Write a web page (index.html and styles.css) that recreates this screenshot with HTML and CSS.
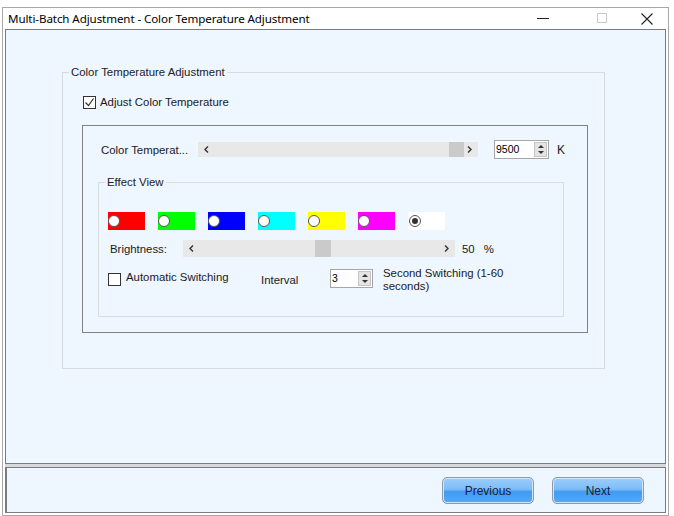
FILE: index.html
```html
<!DOCTYPE html>
<html lang="en">
<head>
    <meta charset="UTF-8">
    <title>Multi-Batch Adjustment - Color Temperature Adjustment</title>
    <link rel="stylesheet" href="styles.css">
</head>
<body>
    <div class="window">
        <div class="titlebar">
            <span class="title">Multi-Batch Adjustment - Color Temperature Adjustment</span>
            <div class="win-controls">
                <svg class="ctl-min" width="13" height="13" viewBox="0 0 13 13"><path d="M0 6.5h12" stroke="#222" stroke-width="1"/></svg>
                <svg class="ctl-max" width="11" height="11" viewBox="0 0 11 11"><rect x="0.5" y="0.5" width="9" height="9" fill="none" stroke="#c8c8c8"/></svg>
                <svg class="ctl-close" width="12" height="12" viewBox="0 0 12 12"><path d="M0.5 0.5l11 11M11.5 0.5l-11 11" stroke="#222" stroke-width="1.1"/></svg>
            </div>
        </div>

        <div class="main">
            <fieldset class="group outer-group">
                <legend>Color Temperature Adjustment</legend>
                <div class="check-row">
                    <span class="checkbox">
                        <svg width="11" height="11" viewBox="0 0 11 11"><path d="M1.5 5.5l3 3 5-7" fill="none" stroke="#333" stroke-width="1.2"/></svg>
                    </span>
                    <span>Adjust Color Temperature</span>
                </div>

                <div class="inner-box">
                    <div class="temp-row">
                        <span class="temp-label">Color Temperat...</span>
                        <div class="slider temp-slider">
                            <svg class="chev" width="5" height="7" viewBox="0 0 5 7"><path d="M4 0.5L1 3.5l3 3" fill="none" stroke="#333" stroke-width="1.4"/></svg>
                            <div class="track"><div class="thumb" style="margin-left: 237px"></div></div>
                            <svg class="chev" width="5" height="7" viewBox="0 0 5 7"><path d="M1 0.5l3 3-3 3" fill="none" stroke="#333" stroke-width="1.4"/></svg>
                        </div>
                        <div class="spin temp-spin">
                            <span class="spin-value">9500</span>
                            <span class="spin-btns">
                                <span class="spin-up"></span>
                                <span class="spin-down"></span>
                            </span>
                        </div>
                        <span class="unit-k">K</span>
                    </div>

                    <fieldset class="group effect-group">
                        <legend>Effect View</legend>
                        <div class="swatches">
                            <span class="swatch red"><span class="radio"></span></span>
                            <span class="swatch green"><span class="radio"></span></span>
                            <span class="swatch blue"><span class="radio"></span></span>
                            <span class="swatch cyan"><span class="radio"></span></span>
                            <span class="swatch yellow"><span class="radio"></span></span>
                            <span class="swatch magenta"><span class="radio"></span></span>
                            <span class="swatch white"><span class="radio selected"></span></span>
                        </div>

                        <div class="bright-row">
                            <span class="bright-label">Brightness:</span>
                            <div class="slider bright-slider">
                                <svg class="chev" width="5" height="7" viewBox="0 0 5 7"><path d="M4 0.5L1 3.5l3 3" fill="none" stroke="#333" stroke-width="1.4"/></svg>
                                <div class="track"><div class="thumb" style="margin-left: 118px"></div></div>
                                <svg class="chev" width="5" height="7" viewBox="0 0 5 7"><path d="M1 0.5l3 3-3 3" fill="none" stroke="#333" stroke-width="1.4"/></svg>
                            </div>
                            <span class="bright-value">50</span>
                            <span class="bright-unit">%</span>
                        </div>

                        <div class="switch-row">
                            <span class="checkbox"></span>
                            <span class="auto-label">Automatic Switching</span>
                            <span class="interval-label">Interval</span>
                            <div class="spin interval-spin">
                                <span class="spin-value">3</span>
                                <span class="spin-btns">
                                    <span class="spin-up"></span>
                                    <span class="spin-down"></span>
                                </span>
                            </div>
                            <span class="switch-note">Second Switching (1-60<br>seconds)</span>
                        </div>
                    </fieldset>
                </div>
            </fieldset>
        </div>

        <div class="divider"></div>

        <div class="footer">
            <button class="btn">Previous</button>
            <button class="btn">Next</button>
        </div>
    </div>
</body>
</html>
```

FILE: styles.css
```css
body {
    margin: 0;
    background: #ffffff;
    font-family: "Liberation Sans", Arial, sans-serif;
    font-size: 11.4px;
    color: #1a1a1a;
}
.window {
    margin: 7px 0 0 2px;
    width: 667px;
    box-sizing: border-box;
    border: 1px solid #a8a8a8;
    background: #ffffff;
}
.titlebar {
    height: 21px;
    display: flex;
    align-items: center;
    padding-left: 5px;
}
.title {
    font-family: "Noto Sans", sans-serif;
    font-size: 11.6px;
    color: #000;
    letter-spacing: -0.1px;
}
.win-controls {
    margin-left: auto;
    display: flex;
    align-items: center;
}
.ctl-min {
    margin-right: 47px;
}
.ctl-max {
    margin-right: 33px;
}
.ctl-close {
    margin-right: 15px;
}
.main {
    margin: 0 2px;
    height: 435px;
    box-sizing: border-box;
    border: 1px solid #7c7c7c;
    background: #eef6ff;
    padding-top: 35px;
}
.group {
    margin: 0;
    padding: 0;
    border: 1px solid #d6dbe0;
    min-inline-size: 0;
}
.group legend {
    margin-left: 6px;
    padding: 0 2px;
    line-height: 14px;
    color: #222;
}
.outer-group {
    margin-left: 56px;
    width: 543px;
    box-sizing: border-box;
    padding-bottom: 35px;
}
.check-row {
    display: flex;
    align-items: center;
    margin: 16px 0 0 20px;
    height: 14px;
    gap: 4px;
}
.checkbox {
    width: 11px;
    height: 11px;
    border: 1px solid #333;
    background: #fff;
    display: flex;
    align-items: center;
    justify-content: center;
}
.inner-box {
    margin: 16px 0 0 19px;
    width: 506px;
    box-sizing: border-box;
    border: 1px solid #828282;
    padding: 14px 0 15px;
}
.temp-row {
    display: flex;
    align-items: center;
    height: 19px;
    padding-left: 18px;
}
.temp-label {
    width: 97px;
}
.slider {
    display: flex;
    align-items: center;
    background: #e8e8e8;
    box-sizing: border-box;
    padding: 0 6px;
}
.track {
    flex: 1;
    display: flex;
    align-items: stretch;
    height: 100%;
    margin: 0 3px;
}
.thumb {
    width: 15px;
    background: #cacaca;
}
.temp-slider {
    width: 280px;
    height: 15px;
}
.spin {
    display: flex;
    align-items: stretch;
    background: #fff;
    border: 1px solid #a6a6a6;
    box-sizing: border-box;
    height: 19px;
}
.spin-value {
    flex: 1;
    padding-left: 1px;
    line-height: 17px;
    font-size: 10.5px;
    color: #000;
}
.spin-btns {
    width: 13px;
    display: flex;
    flex-direction: column;
    margin: 1px 1px 1px 0;
    background: #e4e4e4;
    border: 1px solid #c4c4c4;
    box-sizing: border-box;
}
.spin-up, .spin-down {
    flex: 1;
    display: flex;
    align-items: center;
    justify-content: center;
}
.spin-up::before {
    content: "";
    border-left: 3px solid transparent;
    border-right: 3px solid transparent;
    border-bottom: 3px solid #333;
}
.spin-down::before {
    content: "";
    border-left: 3px solid transparent;
    border-right: 3px solid transparent;
    border-top: 3px solid #333;
}
.temp-spin {
    width: 55px;
    margin-left: 16px;
}
.unit-k {
    margin-left: 8px;
    font-size: 12px;
}
.effect-group {
    margin: 16px 0 0 15px;
    width: 466px;
    box-sizing: border-box;
    padding: 23px 0 23px 0;
    border-color: #d8dde2;
}
.swatches {
    display: flex;
    gap: 13px;
    padding-left: 9px;
}
.swatch {
    width: 37px;
    height: 18px;
    display: flex;
    align-items: center;
}
.red { background: #ff0000; }
.green { background: #00ff00; }
.blue { background: #0000ff; }
.cyan { background: #00ffff; }
.yellow { background: #ffff00; }
.magenta { background: #ff00ff; }
.white { background: #ffffff; }
.radio {
    width: 10px;
    height: 10px;
    border-radius: 50%;
    background: #fff;
    border: 1px solid #555;
    display: flex;
    align-items: center;
    justify-content: center;
}
.white .radio {
    margin-left: 1px;
}
.radio.selected::before {
    content: "";
    width: 6px;
    height: 6px;
    border-radius: 50%;
    background: #333;
}
.bright-row {
    display: flex;
    align-items: center;
    margin-top: 10px;
    height: 17px;
    padding-left: 11px;
}
.bright-label {
    width: 73px;
}
.bright-slider {
    width: 272px;
    height: 17px;
}
.bright-slider .thumb {
    width: 16px;
}
.bright-value {
    margin-left: 7px;
}
.bright-unit {
    margin-left: 9px;
}
.switch-row {
    display: flex;
    align-items: flex-start;
    margin-top: 10px;
    padding-left: 9px;
}
.switch-row .checkbox {
    margin-top: 6px;
}
.auto-label {
    margin: 4px 0 0 5px;
    width: 135px;
}
.interval-label {
    margin-top: 7px;
    width: 69px;
}
.interval-spin {
    margin-top: 2px;
    width: 43px;
}
.switch-note {
    margin-left: 10px;
    line-height: 13px;
}
.divider {
    height: 3px;
    margin: 0 2px;
    background: #d4d8dc;
}
.footer {
    margin: 0 2px 2px;
    height: 46px;
    box-sizing: border-box;
    border: 1px solid #7c7c7c;
    border-left-width: 2px;
    background: #eef6ff;
    display: flex;
    justify-content: flex-end;
    gap: 18px;
    padding: 9px 21px 0 0;
}
.btn {
    width: 92px;
    height: 27px;
    border: 1px solid #8e9aa6;
    border-radius: 5px;
    box-shadow: inset 0 0 0 1px #cfe6fc;
    background: linear-gradient(#9ccdfb 0%, #7dbcf8 45%, #3f9bf2 55%, #5aa9f4 100%);
    font-family: "Liberation Sans", Arial, sans-serif;
    font-size: 12px;
    color: #14233a;
    padding: 0;
}
```
